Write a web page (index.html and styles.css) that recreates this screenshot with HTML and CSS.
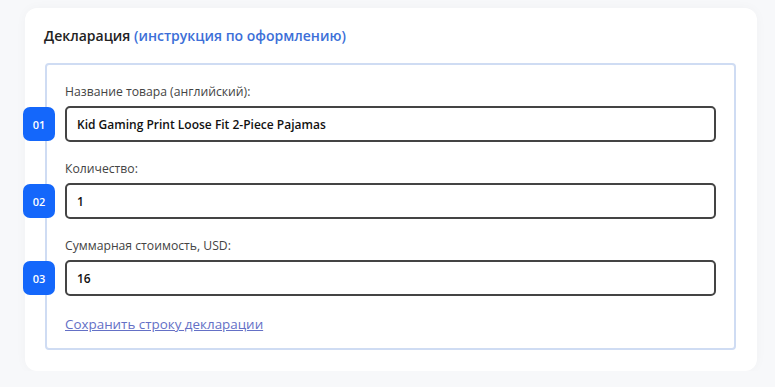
FILE: index.html
```html
<!DOCTYPE html>
<html lang="ru">
<head>
    <meta charset="UTF-8">
    <meta name="viewport" content="width=device-width, initial-scale=1.0">
    <title>Декларация</title>
    <link rel="stylesheet" href="styles.css">
</head>
<body>

<div class="card">
    <h2 class="card-title">Декларация <a href="#" class="title-link">(инструкция по оформлению)</a></h2>

    <div class="declaration">
        <div class="field">
            <label class="field-label">Название товара (английский):</label>
            <div class="field-row">
                <span class="step">01</span>
                <input class="field-input" type="text" value="Kid Gaming Print Loose Fit 2-Piece Pajamas">
            </div>
        </div>
        <div class="field">
            <label class="field-label">Количество:</label>
            <div class="field-row">
                <span class="step">02</span>
                <input class="field-input" type="text" value="1">
            </div>
        </div>
        <div class="field">
            <label class="field-label">Суммарная стоимость, USD:</label>
            <div class="field-row">
                <span class="step">03</span>
                <input class="field-input" type="text" value="16">
            </div>
        </div>

        <a href="#" class="save-link">Сохранить строку декларации</a>
    </div>
</div>

</body>
</html>
```

FILE: styles.css
```css
body {
    font-family: 'Open Sans', 'Noto Sans', sans-serif;
    margin: 0;
    padding: 8px 18px 0 25px;
    background-color: #f7f8fa;
    color: #222;
}

.card {
    width: 732px;
    box-sizing: border-box;
    padding: 18px 21px 21px 19px;
    background-color: #fff;
    border-radius: 12px;
    box-shadow: 0 0 12px rgba(0, 0, 0, 0.03);
}

.card-title {
    margin: 0 0 17px 0;
    font-size: 14px;
    line-height: 20px;
    font-weight: 600;
    color: #222;
}

.title-link {
    color: #3c6fd8;
    text-decoration: none;
}

.declaration {
    margin-left: 1px;
    padding: 19px 18px 15px 18px;
    border: 2px solid #cfdcf3;
    border-radius: 4px;
    display: flex;
    flex-direction: column;
    gap: 19px;
}

.field {
    display: flex;
    flex-direction: column;
    gap: 6px;
}

.field-label {
    font-size: 12.2px;
    line-height: 16px;
    color: #444;
}

.field-row {
    position: relative;
}

.field-input {
    width: 100%;
    box-sizing: border-box;
    height: 36px;
    padding: 0 10px;
    border: 2px solid #444;
    border-radius: 5px;
    font-family: inherit;
    font-size: 12px;
    font-weight: 600;
    color: #111;
    background: #fff;
    outline: none;
}

/* номер шага поверх рамки блока */
.step {
    position: absolute;
    left: -42px;
    top: 1px;
    width: 32px;
    height: 34px;
    border-radius: 7px;
    background-color: #1467fb;
    color: #fff;
    font-size: 11px;
    font-weight: 600;
    display: flex;
    align-items: center;
    justify-content: center;
}

.save-link {
    margin-top: 0;
    align-self: flex-start;
    font-size: 13.4px;
    line-height: 18px;
    font-weight: 500;
    color: #6470c6;
}
```
